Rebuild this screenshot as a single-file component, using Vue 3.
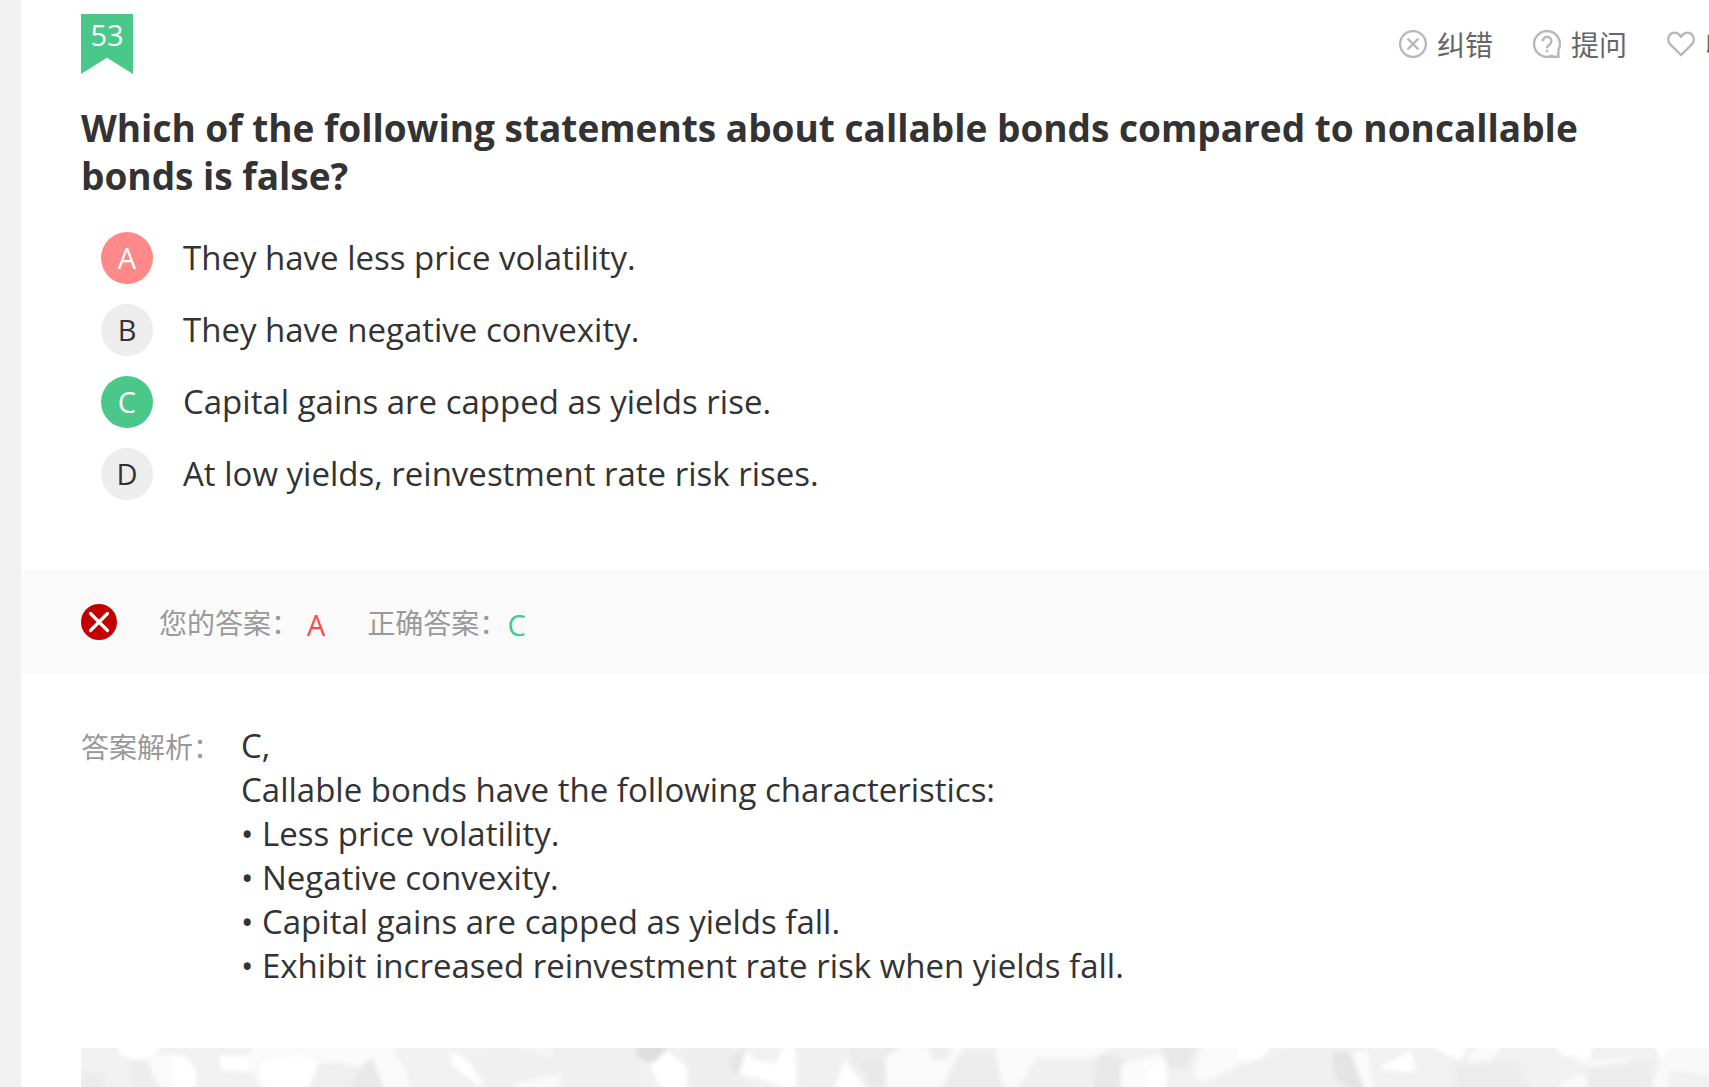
<template>
  <div class="page">
    <main class="question">
      <header class="question-head">
        <span class="number">{{ question.number }}</span>
        <div class="actions">
          <button type="button" class="action">
            <svg viewBox="0 0 28 28" class="action-icon">
              <circle cx="14" cy="14" r="12.9" />
              <path d="M8.5 8.5l11 11M19.5 8.5l-11 11" />
            </svg>
            纠错
          </button>
          <button type="button" class="action">
            <svg viewBox="0 0 28 28" class="action-icon">
              <path d="M20 25.4A12.9 12.9 0 1 1 25.4 20V26.8H18" />
              <path d="M9.8 11.2a4.3 4.3 0 1 1 6.6 3.5c-1.6 1-2.4 1.6-2.4 3.6M14 19.8v2.4" />
            </svg>
            提问
          </button>
          <button type="button" class="action">
            <svg viewBox="0 0 28 28" class="action-icon">
              <path
                d="M14 25L3.2 14.4C.6 11.6.6 7.2 3 4.6c2.6-2.6 6.6-2.6 9.2 0L14 6.6l1.8-2c2.6-2.6 6.6-2.6 9.2 0 2.4 2.6 2.4 7-.2 9.8z"
              />
            </svg>
            收藏
          </button>
        </div>
      </header>

      <h1 class="title">{{ question.title }}</h1>

      <div class="options">
        <label v-for="option in question.options" :key="option.key" class="option">
          <input
            type="radio"
            name="answer"
            class="option-input"
            :value="option.key"
            v-model="selected"
          />
          <span class="option-key" :class="keyClass(option.key)">{{ option.key }}</span>
          <span>{{ option.text }}</span>
        </label>
      </div>

      <section class="result">
        <svg viewBox="0 0 36 36" class="result-icon">
          <circle cx="18" cy="18" r="18" fill="#c30000" />
          <path d="M9.5 9.5l17 17M26.5 9.5l-17 17" stroke="#fff" stroke-width="3.2" stroke-linecap="round" />
        </svg>
        <span class="result-label">您的答案：</span>
        <span class="result-value mine">{{ selected }}</span>
        <span class="result-label">正确答案：</span>
        <span class="result-value right">{{ question.correct }}</span>
      </section>

      <section class="analysis">
        <h2 class="analysis-label">答案解析：</h2>
        <div class="analysis-text">
          <p v-for="line in question.analysis" :key="line">{{ line }}</p>
        </div>
      </section>

      <svg class="banner" viewBox="0 0 1628 39" preserveAspectRatio="xMinYMin slice">
        <rect width="1628" height="39" fill="#f1f1f1" />
        <g class="shards">
          <polygon
            v-for="(shard, i) in shards"
            :key="i"
            :points="shard[1]"
            :fill="shard[0]"
          />
        </g>
      </svg>
    </main>
  </div>
</template>

<script setup>
import { ref } from "vue";

const question = {
  number: 53,
  title:
    "Which of the following statements about callable bonds compared to noncallable bonds is false?",
  options: [
    { key: "A", text: "They have less price volatility." },
    { key: "B", text: "They have negative convexity." },
    { key: "C", text: "Capital gains are capped as yields rise." },
    { key: "D", text: "At low yields, reinvestment rate risk rises." },
  ],
  correct: "C",
  analysis: [
    "C,",
    "Callable bonds have the following characteristics:",
    "• Less price volatility.",
    "• Negative convexity.",
    "• Capital gains are capped as yields fall.",
    "• Exhibit increased reinvestment rate risk when yields fall.",
  ],
};

const selected = ref("A");

function keyClass(key) {
  if (key === question.correct) return "is-right";
  if (key === selected.value) return "is-wrong";
  return "";
}

// crystal pattern of the banner: fill, points
const shards = [
  ["#ffffff", "36,-6 80,-6 76,6 66,11 50,11 38,6"],
  ["#ebebeb", "0,25 20,26 24,45 0,45"],
  ["#ececec", "48,14 68,14 76,45 54,45"],
  ["#fafafa", "66,14 78,6 104,8 114,20 116,45 82,45"],
  ["#ffffff", "92,8 104,8 114,20 116,45 92,45"],
  ["#ffffff", "138,8 174,8 170,24 140,22"],
  ["#fafafa", "172,-6 320,-6 330,45 182,45 166,12"],
  ["#ffffff", "178,14 220,8 236,14 226,45 184,45"],
  ["#efefef", "238,16 254,14 280,20 290,10 304,45 226,45"],
  ["#e9e9e9", "280,18 292,11 304,45 268,45"],
  ["#f2f2f2", "308,-6 372,-6 372,18 324,22"],
  ["#ffffff", "370,3 388,14 404,39 396,36 372,18"],
  ["#f0f0f0", "394,8 420,-6 555,-6 556,45 404,45"],
  ["#f8f8f8", "440,0 470,0 470,8"],
  ["#fafafa", "434,36 478,26 480,45 434,45"],
  ["#dedede", "554,-6 590,-6 584,4 574,14 564,14 556,8"],
  ["#ffffff", "586,2 606,20 606,45 582,45 569,18"],
  ["#eeeeee", "606,-6 666,-6 658,26 674,45 608,45"],
  ["#e6e6e6", "646,12 664,0 660,28 650,22"],
  ["#ffffff", "664,6 714,-2 716,45 690,34 658,26"],
  ["#f1f1f1", "664,-6 706,-6 694,15 672,12"],
  ["#f0f0f0", "716,-6 776,-6 764,20 758,45 718,45"],
  ["#ececec", "766,-6 830,-6 802,12 804,36 796,39 770,14"],
  ["#ffffff", "764,12 788,45 752,45"],
  ["#e8e8e8", "780,12 803,12 804,36 796,39 786,36"],
  ["#fafafa", "806,8 824,-4 886,-6 872,16 858,45 806,45"],
  ["#eeeeee", "844,-6 872,-6 868,10 852,12"],
  ["#ececec", "880,4 916,6 920,26 932,45 858,45 874,18"],
  ["#fafafa", "914,-6 1022,-6 1028,8 1010,11 956,10 934,45 920,36"],
  ["#f0f0f0", "954,12 1012,10 1036,45 934,45"],
  ["#e8e8e8", "1014,10 1024,5 1044,12 1038,45 1012,45"],
  ["#fbfbfb", "1040,16 1078,6 1086,18 1084,45 1040,45"],
  ["#ffffff", "1066,24 1084,12 1086,45 1064,45"],
  ["#e8e8e8", "1080,-6 1118,-6 1106,20 1088,20"],
  ["#fafafa", "1122,-6 1152,-6 1162,16 1122,34 1111,28"],
  ["#ffffff", "1154,-6 1192,-6 1180,15 1160,14"],
  ["#efefef", "1160,16 1190,8 1266,0 1260,45 1128,45"],
  ["#e4e4e4", "1251,4 1270,4 1286,45 1272,45 1254,30"],
  ["#fafafa", "1270,4 1286,2 1294,45 1284,45"],
  ["#ffffff", "1300,18 1330,3 1336,24 1300,22"],
  ["#ffffff", "1346,-6 1388,-6 1380,12 1364,6"],
  ["#fafafa", "1386,12 1398,-6 1424,-6 1402,22"],
  ["#ececec", "1374,16 1434,12 1450,45 1374,45"],
  ["#ffffff", "1472,-6 1514,-6 1508,11 1480,7"],
  ["#f8f8f8", "1488,12 1550,10 1536,28"],
  ["#fafafa", "1478,36 1504,24 1508,45 1478,45"],
  ["#ececec", "1506,20 1570,12 1570,45 1508,45"],
  ["#ffffff", "1572,-6 1594,-6 1580,12"],
  ["#f9f9f9", "1580,10 1594,-6 1640,-6 1640,28 1590,22 1586,45 1570,45"],
];
</script>

<style>
body {
  margin: 0;
  background: #f1f1f1;
}
</style>

<style scoped>
.page {
  padding-left: 21px;
  overflow: hidden;
  font-family: "Open Sans", "Noto Sans CJK SC", sans-serif;
  color: #333;
}

.question {
  background: #fff;
}

.question-head {
  display: flex;
  justify-content: space-between;
  align-items: flex-start;
  /* the toolbar runs past the right edge of the window */
  margin-right: -52px;
  padding: 14px 0 0 60px;
}

.number {
  width: 52px;
  height: 60px;
  background: #49c88a;
  clip-path: polygon(0 0, 100% 0, 100% 100%, 50% 73%, 0 100%);
  color: #fff;
  font-size: 29px;
  line-height: 42px;
  text-align: center;
}

.actions {
  display: flex;
  gap: 40px;
  padding-top: 8px;
}

.action {
  display: flex;
  align-items: center;
  gap: 10px;
  padding: 0;
  border: none;
  background: none;
  font-family: "Noto Sans CJK SC", sans-serif;
  font-size: 28px;
  line-height: 44px;
  white-space: nowrap;
  color: #666;
  cursor: pointer;
}

.action-icon {
  width: 28px;
  height: 28px;
  fill: none;
  stroke: #b8b8b8;
  stroke-width: 2.4;
}

.title {
  margin: 30px 60px 0;
  font-size: 37px;
  font-weight: bold;
  line-height: 48px;
}

.options {
  display: flex;
  flex-direction: column;
  gap: 20px;
  padding: 32px 60px 70px 80px;
}

.option {
  display: flex;
  align-items: center;
  gap: 30px;
  position: relative;
  font-size: 33px;
  line-height: 52px;
  cursor: pointer;
}

.option-input {
  position: absolute;
  opacity: 0;
}

.option-key {
  width: 52px;
  height: 52px;
  border-radius: 50%;
  background: #ededed;
  font-size: 29px;
  text-align: center;
}

.option-key.is-wrong {
  background: #ff8888;
  color: #fff;
}

.option-key.is-right {
  background: #49c88a;
  color: #fff;
}

.result {
  display: flex;
  align-items: center;
  height: 104px;
  padding-left: 60px;
  background: #fafafa;
}

.result-icon {
  width: 36px;
  height: 36px;
  margin-right: 42px;
}

.result-label,
.analysis-label {
  color: #999;
  font-family: "Noto Sans CJK SC", sans-serif;
  font-size: 28px;
  font-weight: normal;
}

.result-value {
  padding-top: 4px;
  font-size: 29px;
}

.mine {
  margin: 0 42px 0 8px;
  color: #ff4949;
}

.right {
  color: #49c88a;
}

.analysis {
  display: flex;
  gap: 20px;
  padding: 50px 60px 60px;
}

.analysis-label {
  margin: 0;
  line-height: 44px;
}

.analysis-text {
  font-size: 33px;
  line-height: 44px;
}

.analysis-text p {
  margin: 0;
}

.banner {
  display: block;
  height: 39px;
  width: calc(100% - 60px);
  margin-left: 60px;
}

.shards {
  filter: blur(2px);
}
</style>
